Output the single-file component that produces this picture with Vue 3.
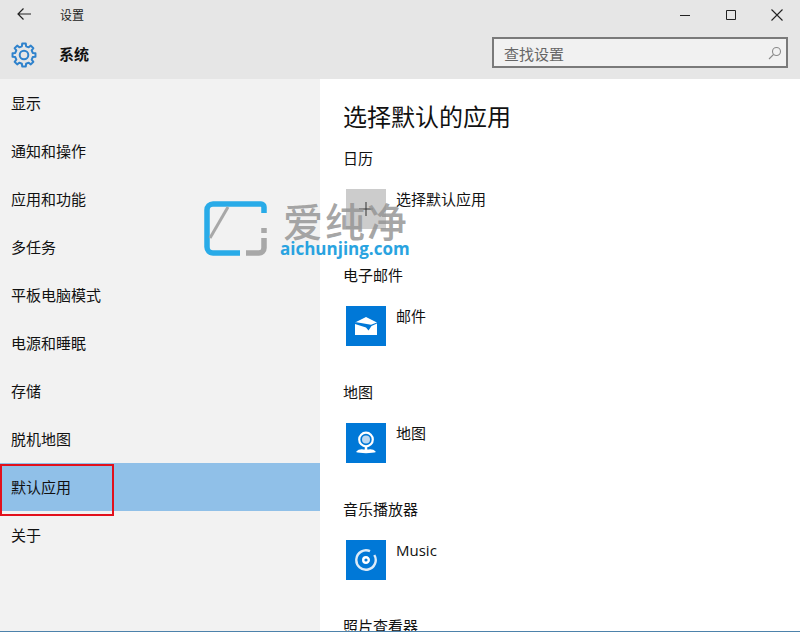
<script setup>
const navItems = ['显示', '通知和操作', '应用和功能', '多任务', '平板电脑模式', '电源和睡眠', '存储', '脱机地图', '默认应用', '关于']
const sections = [
  { title: '日历', app: '选择默认应用', kind: 'plus' },
  { title: '电子邮件', app: '邮件', kind: 'mail' },
  { title: '地图', app: '地图', kind: 'map' },
  { title: '音乐播放器', app: 'Music', kind: 'music' },
  { title: '照片查看器', app: '', kind: '' },
]
const gearPath = (() => {
  const teeth = 8
  const c = 13
  const pt = (r, a) => `${(c + r * Math.cos(a)).toFixed(2)} ${(c + r * Math.sin(a)).toFixed(2)}`
  const step = (Math.PI * 2) / teeth
  let d = ''
  for (let i = 0; i < teeth; i++) {
    const a = i * step
    d += `${i ? 'L' : 'M'}${pt(9, a - step * 0.3)}L${pt(11.6, a - step * 0.2)}L${pt(11.6, a + step * 0.2)}L${pt(9, a + step * 0.3)}`
  }
  return d + 'Z'
})()
</script>

<template>
  <div class="window">
    <header class="header">
      <div class="titlebar">
        <svg class="back" width="16" height="16" viewBox="0 0 16 16" fill="none" stroke="#222" stroke-width="1.2">
          <path d="M2 8h13M7.5 2.5 2 8l5.5 5.5" />
        </svg>
        <span class="title">设置</span>
        <div class="controls">
          <svg width="12" height="12" viewBox="0 0 12 12" fill="none" stroke="#222"><path d="M1 6.5h10" /></svg>
          <svg width="12" height="12" viewBox="0 0 12 12" fill="none" stroke="#222"><path d="M1.5 1.5h9v9h-9z" /></svg>
          <svg width="12" height="12" viewBox="0 0 12 12" fill="none" stroke="#222" stroke-width="1.1"><path d="M.5.5l11 11M11.5.5l-11 11" /></svg>
        </div>
      </div>
      <div class="subbar">
        <svg class="gear" width="26" height="26" viewBox="0 0 26 26" fill="none" stroke="#2f82cc" stroke-width="2" stroke-linejoin="round">
          <path :d="gearPath" />
          <circle cx="13" cy="13" r="4.3" />
        </svg>
        <strong class="section-name">系统</strong>
        <div class="search">
          <span class="search-text">查找设置</span>
          <svg width="14" height="14" viewBox="0 0 14 14" fill="none" stroke="#8a8a8a" stroke-width="1.1">
            <circle cx="8.5" cy="5.5" r="4" /><path d="M5.5 8.5 1 13" />
          </svg>
        </div>
      </div>
    </header>

    <div class="body">
      <nav class="nav">
        <div v-for="(item, i) in navItems" :key="item" class="nav-item" :class="{ selected: i === 8 }">{{ item }}</div>
      </nav>
      <main class="content">
        <h1>选择默认的应用</h1>
        <section v-for="s in sections" :key="s.title" class="group">
          <div class="group-title">{{ s.title }}</div>
          <div v-if="s.kind" class="app">
            <div class="tile" :class="s.kind">
              <svg v-if="s.kind === 'plus'" width="16" height="16" viewBox="0 0 16 16" stroke="#333" fill="none"><path d="M8 1v14M1 8h14" /></svg>
              <svg v-else-if="s.kind === 'mail'" width="22" height="18" viewBox="0 0 22 18" fill="#fff">
                <path d="M0 5.5 11 0l11 5.500-6 2.200L1.500 5.300z" />
                <path d="M0 7l11 3.500 2.500 3L16.500 9 22 6.500V18H0z" />
              </svg>
              <svg v-else-if="s.kind === 'map'" width="26" height="26" viewBox="0 0 26 26" fill="none" stroke="#fff">
                <circle cx="13" cy="9.5" r="6.800" stroke-width="2.2" />
                <circle cx="13" cy="9.5" r="4" fill="#bcd8f2" stroke="none" />
                <path d="M13 16v5" stroke-width="2.5" />
                <path d="M3 22c2-2.500 5-3 7-2.500h6c2-.5 5 0 7 2.500-3 1.500-17 1.500-20 0z" fill="#fff" stroke="none" />
              </svg>
              <svg v-else width="24" height="24" viewBox="0 0 24 24" fill="none" stroke="#dcebf8">
                <path d="M20.300 7A9.700 9.700 0 1 1 16 3.200" stroke-width="2.4" />
                <circle cx="12" cy="12" r="2.8" stroke-width="2.4" stroke="#fff" />
              </svg>
            </div>
            <span class="app-name">{{ s.app }}</span>
          </div>
        </section>
      </main>
    </div>

    <div class="red-box"></div>

    <div class="watermark">
      <svg class="wm-logo" width="63" height="55" viewBox="0 0 63 55" fill="none" stroke-width="5.5">
        <path d="M36 52H9a6 6 0 0 1-6-6V9a6 6 0 0 1 6-6h48a3 3 0 0 1 3 3v6" stroke="#29abe8" />
        <path d="M6 37 24 6" stroke="#a8a8a8" stroke-width="3" />
        <path d="M60 27v5M60 37v10a5 5 0 0 1-5 5H42" stroke="#a8a8a8" />
      </svg>
      <div class="wm-text">
        <div class="wm-cn">爱纯净</div>
        <div class="wm-en">aichunjing.com</div>
      </div>
    </div>

    <div class="bottom-line"></div>
  </div>
</template>

<style scoped>
.window {
  position: relative;
  width: 800px;
  height: 632px;
  overflow: hidden;
  background: #fff;
  color: #111;
  font-family: "Open Sans", "Noto Sans CJK SC", sans-serif;
  font-size: 15px;
}
.header {
  height: 79px;
  background: #e6e6e6;
}
.titlebar {
  height: 30px;
  display: flex;
  align-items: center;
  padding-left: 16px;
}
.back {
  margin-top: -2px;
}
.title {
  margin-left: 28px;
  font-size: 12px;
  color: #222;
  margin-top: -1px;
}
.controls {
  margin-left: auto;
  display: flex;
  gap: 34px;
  padding-right: 17px;
}
.subbar {
  height: 49px;
  display: flex;
  align-items: center;
  padding: 0 12px 0 11px;
}
.section-name {
  margin-left: 22px;
  color: #111;
  margin-top: -2px;
}
.search {
  margin-left: auto;
  width: 296px;
  height: 31px;
  box-sizing: border-box;
  border: 2px solid #7a7a7a;
  background: #f1f1f1;
  display: flex;
  align-items: center;
  justify-content: space-between;
  padding: 0 4px 0 10px;
  color: #666;
  margin-top: -4px;
}
.search-text {
  line-height: 22px;
  padding-top: 2px;
}
.body {
  display: flex;
  height: 553px;
}
.nav {
  width: 320px;
  flex: none;
  background: #f2f2f2;
}
.nav-item {
  height: 48px;
  line-height: 48px;
  padding-left: 11px;
  color: #111;
}
.nav-item.selected {
  background: #90c0e8;
}
.content {
  flex: 1;
  padding-left: 24px;
  overflow: hidden;
}
h1 {
  margin: 0 0 0 -1px;
  padding-top: 22px;
  height: 32px;
  line-height: 32px;
  font-size: 24px;
  font-weight: 400;
  color: #111;
}
.group {
  height: 117px;
}
.group:first-of-type {
  margin-top: 14px;
}
.group-title {
  height: 24px;
  line-height: 23px;
  margin-left: -1px;
}
.app {
  display: flex;
  margin-top: 18px;
  padding-left: 2px;
}
.tile {
  width: 40px;
  height: 40px;
  background: #0078d7;
  display: flex;
  align-items: center;
  justify-content: center;
}
.tile.plus {
  background: #cccccc;
}
.app-name {
  margin-left: 10px;
  line-height: 20px;
}
.red-box {
  position: absolute;
  left: 0;
  top: 464px;
  width: 114px;
  height: 52px;
  box-sizing: border-box;
  border: 2px solid #e2101c;
}
.watermark {
  position: absolute;
  left: 204px;
  top: 201px;
  display: flex;
  gap: 14px;
  pointer-events: none;
}
.wm-text {
  margin-top: 2px;
}
.wm-cn {
  font-size: 40px;
  line-height: 38px;
  letter-spacing: 2px;
  font-weight: 500;
  color: rgba(150, 150, 150, .85);
  margin-left: 2px;
}
.wm-en {
  font-family: "Open Sans", sans-serif;
  font-weight: 700;
  font-size: 17px;
  line-height: 20px;
  color: #29a3e0;
  margin-top: -2px;
  margin-left: -1px;
}
.bottom-line {
  position: absolute;
  left: 0;
  right: 0;
  bottom: 0;
  height: 1px;
  background: #4d82ab;
}
</style>

<style>
html, body { margin: 0; background: #fff; }
</style>
